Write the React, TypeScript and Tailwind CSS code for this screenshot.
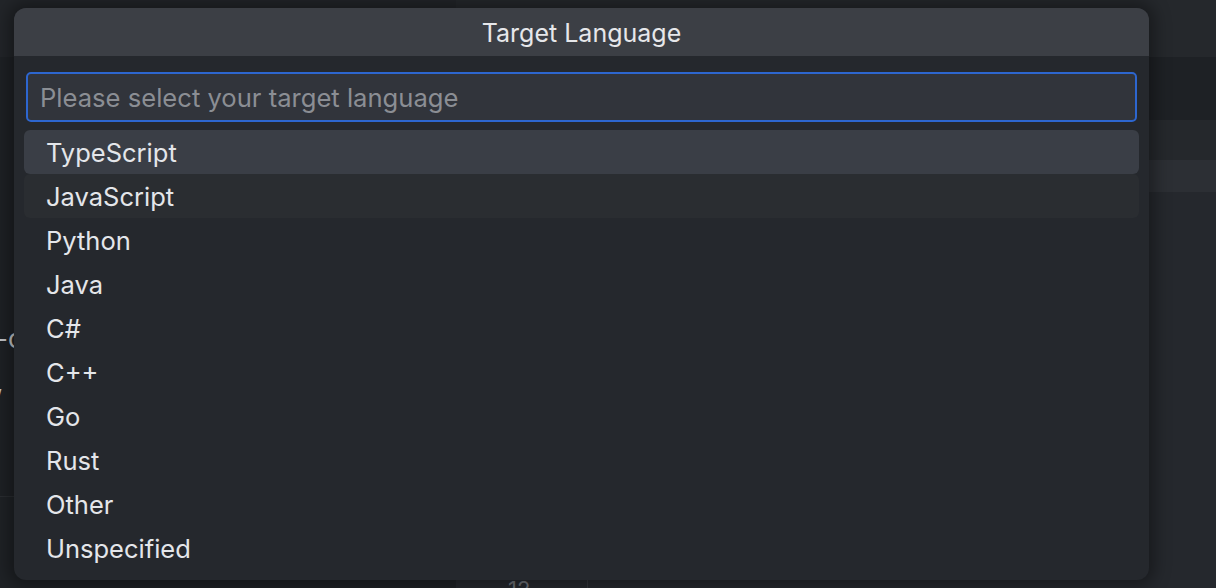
import React from "react";

const languages = [
  "TypeScript",
  "JavaScript",
  "Python",
  "Java",
  "C#",
  "C++",
  "Go",
  "Rust",
  "Other",
  "Unspecified",
];

const font = { fontFamily: "Inter, 'Noto Sans', sans-serif" };

export default function App() {
  return (
    <div
      className="relative w-[1216px] h-[588px] overflow-hidden bg-[#25282d] text-[#e4e6ea]"
      style={font}
    >
      {/* editor behind the picker */}
      <div className="flex h-full">
        <div className="w-[456px] flex flex-col">
          <div className="h-[57px] bg-[#222529]" />
          <div className="h-[439px] bg-[#1e2125] relative">
            <span className="absolute left-[-4px] top-[262px] text-[26px] text-[#c4c6ca]">-c</span>
            <span className="absolute left-[-4px] top-[306px] text-[26px] text-[#c4c6ca]">,</span>
          </div>
          <div className="flex-1 bg-[#1f2226] border-t border-[#2a2d31]" />
        </div>
        <div className="flex-1 flex flex-col">
          <div className="h-[57px] bg-[#25282c]" />
          <div className="h-[63px] bg-[#1e2125]" />
          <div className="h-[40px] bg-[#25282c]" />
          <div className="h-[32px] bg-[#2c2f34]" />
          <div className="flex-1 bg-[#25282d] flex items-end">
            <div className="w-[132px] h-[8px] border-r border-[#33363b] relative">
              <span className="absolute left-[52px] top-[-2px] text-[22px] leading-none text-[#6b6e74]">12</span>
            </div>
          </div>
        </div>
      </div>

      {/* quick pick */}
      <div className="absolute left-[14px] top-[8px] w-[1135px] h-[572px] rounded-[12px] bg-[#25282d] overflow-hidden shadow-[0_0_16px_6px_rgba(0,0,0,0.35)]">
        <div className="h-[48px] bg-[#3c3f45] flex items-center justify-center text-[25px] text-[#e6e7ea] pt-[3px]">
          Target Language
        </div>
        <div className="px-[12px] pt-[16px]">
          <div className="h-[50px] border-2 border-[#2d66cf] rounded-[5px] bg-[#31343b] flex items-center px-[12px] pt-[3px] text-[25.6px] text-[#8b8e94]">
            Please select your target language
          </div>
        </div>
        <div className="px-[10px] pt-[8px] flex flex-col">
          {languages.map((lang, i) => (
            <div
              key={lang}
              className={
                "h-[44px] flex items-center pl-[22px] pt-[3px] text-[25.5px] rounded-[6px] " +
                (i === 0 ? "bg-[#3a3e46]" : i === 1 ? "bg-[#2a2d31]" : "")
              }
            >
              {lang}
            </div>
          ))}
        </div>
      </div>
    </div>
  );
}
